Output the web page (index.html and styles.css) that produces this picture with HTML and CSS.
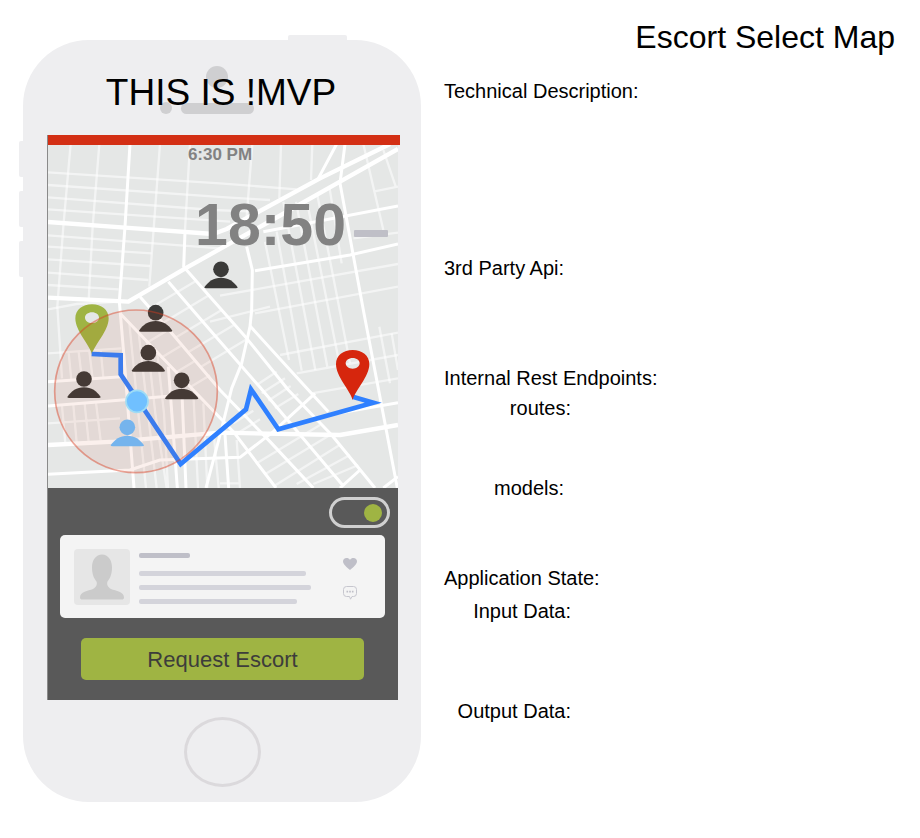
FILE: index.html
```html
<!DOCTYPE html>
<html lang="en">
<head>
<meta charset="utf-8">
<title>Escort Select Map</title>
<link rel="stylesheet" href="styles.css">
</head>
<body>
<main class="page">
  <section class="phone" aria-label="Phone mockup">
    <span class="key key-power"></span>
    <span class="key key-mute"></span>
    <span class="key key-up"></span>
    <span class="key key-down"></span>

    <header class="phone-top">
      <svg class="sensors" viewBox="0 0 94 50" aria-hidden="true">
        <circle cx="57" cy="11" r="11"/>
        <circle cx="6" cy="42" r="6"/>
        <rect x="21" y="37" width="73" height="11" rx="5.5"/>
      </svg>
      <h2 class="phone-title">THIS IS !MVP</h2>
    </header>

    <div class="screen">
      <div class="alert-bar"></div>
      <div class="map">
        <svg class="map-art" viewBox="24 45 1050 1029" role="img" aria-label="Street map with route">
          <defs>
            <g id="person">
              <circle r="23.5"/>
              <path d="M-50 54C-38 36-22 25 0 25S38 36 50 54Q50 57 44 57H-44Q-50 57-50 54Z"/>
            </g>
            <path id="pin" fill-rule="evenodd" d="M0 108C-8 78-50 38-50 0C-50-26-28-42 0-42S50-26 50 0C50 38 8 78 0 108ZM0-18C-12-18-21-11-21-2S-12 14 0 14S21 7 21-2S12-18 0-18Z"/>
          </defs>
          <rect class="land" x="24" y="42" width="1050" height="1032"/>

          <g class="street minor">
            <path d="M92 42L70 290L52 530L66 745M178 42L158 290L146 510M360 42L340 310L328 470M450 42L435 300M637 42L620 260M723 42L718 205M817 42L813 150"/>
            <path d="M24 127L540 160L770 178M24 165L570 203L690 210M24 202L520 240L625 244M24 238L570 275M24 316L540 355M24 350L335 370M24 388L330 408M24 428L325 450M24 465L236 478M24 538L110 522L240 515"/>
            <path d="M24 670L244 655M24 880L240 865M86 668L94 750M116 666L126 748M148 664L158 746M182 660L190 742M66 828L76 940M100 825L110 938M134 822L146 936M168 818L182 932"/>
            <path d="M268 580L290 800L318 1074M296 608L318 800L350 1074M322 640L346 850L380 1074M352 670L372 850L384 1074M460 790L474 1074M490 820L502 1074M522 920L536 1074M590 930L600 1074M540 1060H600"/>
            <path d="M970 42L1030 300M1030 60L1068 172M1000 185L1074 170M940 325L1074 308M540 497L1074 402M645 550L1074 470M720 675L1074 608M770 730L1074 675M815 790L1074 745"/>
            <path d="M675 335L747 690M710 305L785 722M730 215L826 720M768 215L862 710M802 220L898 700M832 195L930 700M868 170L905 400M1018 590L1050 760M1055 610L1074 720"/>
            <path d="M330 535L469 452M368 579L507 496M406 623L545 540M444 667L583 584M482 711L620 628M318 640L378 604M362 684L422 648M406 728L466 692M450 772L510 736M510 575L690 530"/>
            <path d="M650 765L710 725M665 790L735 745M685 812L752 768M705 835L775 792M580 880L640 842M600 905L660 868M650 1000L840 885M676 1032L870 915M706 1066L900 944M770 1062L930 975M820 1062L955 1005"/>
          </g>

          <g class="street major">
            <path d="M270 42L255 290L238 515L252 680L282 1074M435 305L431 413M915 42L900 160L970 540L1072 1074M890 42L835 145"/>
            <path d="M620 350L637 420L635 540L630 590L605 700L575 775L544 900L498 1074M385 710L412 1074M424 745L438 1074M555 915L566 1074"/>
            <path d="M431 410L510 500L620 625L745 780L875 915L1005 1074M630 588L755 725L865 845M385 455L510 600L660 772L910 1068M300 500L400 615L540 780L690 935L820 1074M240 550L460 780L580 905L708 1074"/>
            <path d="M670 305L1074 228M645 422L930 375L1074 342M880 852L1074 818M24 755L245 740M24 828L394 798M24 1033L270 1020L360 990L600 982L700 905L825 790M900 1074L960 1020M1030 1074L1074 1040"/>
          </g>
          <g class="street avenue">
            <path d="M24 276L255 293L520 312L560 297L840 145L1050 42M24 503L265 515L440 413L570 340L670 285L900 155L1074 57M24 945L224 935L540 908L900 915L1074 885"/>
          </g>

          <g class="people">
            <use href="#person" x="543" y="418"/>
            <use href="#person" x="347" y="548"/>
            <use href="#person" x="325" y="668"/>
            <use href="#person" x="132" y="747"/>
            <use href="#person" x="425" y="751"/>
            <use class="me" href="#person" x="262" y="892"/>
          </g>
          <use class="pin-start" href="#pin" x="156" y="565"/>
          <path class="route" d="M155 672L242 676V733L422 1002L618 838L633 778L715 898L1000 818L938 800"/>
          <circle class="range" cx="288" cy="784" r="244"/>
          <use class="pin-end" href="#pin" x="938" y="702"/>
          <circle class="here" cx="291" cy="814" r="33"/>
        </svg>
        <div class="map-overlay">
          <p class="status-time">6:30 PM</p>
          <p class="countdown"><span>18:50</span><span class="unit"></span></p>
        </div>
      </div>

      <div class="panel">
        <input class="toggle" type="checkbox" checked aria-label="Escort available">
        <article class="card">
          <svg class="avatar" viewBox="0 0 56 56" aria-hidden="true">
            <rect width="56" height="56" rx="4" fill="#e6e6e6"/>
            <path fill="#cbcbcb" d="M28 5.500C34 5.500 38 11 38 18.500C38 26 35.500 30 33.500 32.500C32.500 35 33.500 38 37 40C42 42 50 42.500 50 48.500C50 50 49 50.500 48 50.500H8C7 50.500 6 50 6 48.500C6 42.500 14 42 19 40C22.500 38 23.500 35 22.500 32.500C20.500 30 18 26 18 18.500C18 11 22 5.500 28 5.500Z"/>
          </svg>
          <div class="lines">
            <span class="line line-name"></span>
            <span class="line line-a"></span>
            <span class="line line-b"></span>
            <span class="line line-c"></span>
          </div>
          <div class="actions">
            <button class="icon-btn" type="button" aria-label="Like">
              <svg viewBox="0 0 14 14" width="14" height="14"><path fill="#bfbfc8" d="M7 13C4 10.500 0 7.500 0 4.300C0 2.300 1.500 1 3.500 1C5 1 6.300 1.600 7 3C7.700 1.600 9 1 10.500 1C12.500 1 14 2.300 14 4.300C14 7.500 10 10.500 7 13Z"/></svg>
            </button>
            <button class="icon-btn" type="button" aria-label="Message">
              <svg viewBox="0 0 14 14" width="14" height="14"><path fill="none" stroke="#c6c6ce" d="M3.500.5H10.500Q13.500.5 13.500 3.500V7.500Q13.500 10.500 10.500 10.500H9L7.500 13.200L6.500 10.500H3.500Q.5 10.500.5 7.500V3.500Q.5.500 3.500.5Z"/><path fill="#bfbfc8" d="M3.500 4.800h1.600v1.600h-1.600zM6.200 4.800h1.600v1.600h-1.600zM8.900 4.800h1.600v1.600h-1.600z"/></svg>
            </button>
          </div>
        </article>
        <button class="request" type="button">Request Escort</button>
      </div>
    </div>

    <button class="home" type="button" aria-label="Home"></button>
  </section>

  <section class="notes">
    <h1>Escort Select Map</h1>
    <section class="note note-tech"><h2>Technical Description:</h2></section>
    <section class="note note-api"><h2>3rd Party Api:</h2></section>
    <section class="note note-rest">
      <h2>Internal Rest Endpoints:</h2>
      <h3>routes:</h3>
      <h3 class="models">models:</h3>
    </section>
    <section class="note note-state">
      <h2>Application State:</h2>
      <h3>Input Data:</h3>
      <h3>Output Data:</h3>
    </section>
  </section>
</main>
</body>
</html>
```
FILE: styles.css
```css
* {
  box-sizing: border-box;
}

body {
  margin: 0;
  background: #fff;
  color: #000;
  font-family: "Liberation Sans", Arial, sans-serif;
}

h1, h2, h3, p {
  margin: 0;
  font-weight: normal;
}

.page {
  display: grid;
  grid-template-columns: minmax(0, 398fr) minmax(0, 451fr);
  gap: 23px;
  padding: 0 25px 0 23px;
  align-items: start;
}

/* Phone */
.phone {
  position: relative;
  margin: 40px 0 36px;
  padding-bottom: 15px;
  border-radius: 66px;
  background: #eeeef0;
}

.key {
  position: absolute;
  left: -4px;
  width: 4px;
  height: 36px;
  border-radius: 2px 0 0 2px;
  background: #eeeef0;
}

.key-power {
  top: -5px;
  left: auto;
  right: 74px;
  width: 59px;
  height: 6px;
  border-radius: 2px 2px 0 0;
}

.key-mute { top: 101px; }
.key-up { top: 151px; }
.key-down { top: 201px; }

.phone-top {
  display: grid;
  height: 95px;
  justify-items: center;
  align-items: center;
}

.sensors,
.phone-title {
  grid-area: 1 / 1;
}

.sensors {
  width: 94px;
  margin-right: 30px;
  margin-top: 6px;
  fill: #cfcfd1;
}

.phone-title {
  margin-top: 10px;
  margin-right: 2px;
  font-size: 37px;
  line-height: 44px;
}

.screen {
  margin: 0 23px 0 24px;
  border-left: 1px solid #8a8a8a;
}

.alert-bar {
  height: 10px;
  margin-right: -2px;
  background: #d32f14;
}

.map {
  position: relative;
}

.map-art {
  display: block;
  width: 100%;
}

.land { fill: #e5e7e6; }

.street {
  fill: none;
  stroke: #fff;
  stroke-linejoin: round;
}

.minor {
  stroke-width: 7px;
  stroke-opacity: 0.55;
}

.major { stroke-width: 9px; }
.avenue { stroke-width: 13px; }
.people { fill: #3a3a38; }
.me { fill: #6ebeff; }
.pin-start { fill: #9fb443; }
.pin-end { fill: #d6260d; }

.route {
  fill: none;
  stroke: #2f80ff;
  stroke-width: 14px;
}

.range {
  fill: rgba(210, 60, 30, 0.08);
  stroke: rgba(217, 60, 30, 0.45);
  stroke-width: 5px;
}

.here {
  fill: #70c0ff;
  stroke: #9fdcf5;
  stroke-width: 5px;
}

.map-overlay {
  position: absolute;
  inset: 0;
  color: #828282;
}

.status-time,
.countdown {
  font-weight: bold;
}

.status-time {
  padding-right: 6px;
  font-size: 17px;
  line-height: 20px;
  text-align: center;
}

.countdown {
  display: flex;
  justify-content: flex-end;
  align-items: center;
  gap: 8px;
  margin-top: 24px;
  padding-right: 10px;
  font-size: 59px;
  line-height: 72px;
}

.unit {
  width: 34px;
  height: 7px;
  margin-top: 16px;
  border-radius: 1px;
  background: #bfbfc7;
}

.panel {
  display: flex;
  flex-direction: column;
  padding: 9px 13px 20px 12px;
  background: #595959;
}

.toggle {
  appearance: none;
  align-self: flex-end;
  display: flex;
  justify-content: flex-end;
  align-items: center;
  width: 61px;
  height: 31px;
  margin: 0 -5px 7px 0;
  padding-right: 5px;
  border: 3px solid #d0d0d0;
  border-radius: 16px;
}

.toggle::before {
  content: "";
  width: 18px;
  height: 18px;
  border-radius: 50%;
  background: #9fb443;
}

.toggle:not(:checked) {
  justify-content: flex-start;
  padding-left: 5px;
}

.card {
  display: flex;
  align-items: flex-start;
  padding: 14px 28px 13px 14px;
  border-radius: 5px;
  background: #f4f4f4;
}

.avatar {
  flex: none;
  width: 56px;
}

.lines {
  flex: 1;
  display: flex;
  flex-direction: column;
  gap: 9px;
  padding: 4px 0 0 9px;
}

.line {
  height: 5px;
  border-radius: 2px;
  background: #d4d4db;
}

.line-name {
  width: 51px;
  margin-bottom: 4px;
  background: #bfbfc8;
}

.line-a { width: 167px; }
.line-b { width: 172px; }
.line-c { width: 158px; }

.actions {
  display: flex;
  flex-direction: column;
  gap: 15px;
  padding-top: 8px;
}

.icon-btn {
  display: block;
  width: 14px;
  height: 14px;
  padding: 0;
  border: 0;
  background: none;
}

.icon-btn svg {
  display: block;
}

.request {
  height: 42px;
  margin: 20px 21px 0;
  padding: 2px 0 0;
  border: 0;
  border-radius: 5px;
  background: #9fb443;
  color: #3d3d3b;
  font: 22px/40px "Liberation Sans", Arial, sans-serif;
}

.home {
  display: block;
  width: 77px;
  height: 70px;
  margin: 17px auto 0;
  border: 3px solid #dbd9dc;
  border-radius: 50%;
  background: none;
}

/* Notes */
.notes {
  padding-top: 19px;
}

h1 {
  margin-bottom: 24px;
  font-size: 32px;
  line-height: 36px;
  text-align: right;
}

.note h2,
.note h3 {
  font-size: 20px;
  line-height: 24px;
}

.note h3 {
  width: 127px;
  text-align: right;
}

.note-tech { min-height: 177px; }
.note-api { min-height: 110px; }

.note-rest {
  display: grid;
  grid-template-rows: 30px 80px 90px;
}

.note-rest .models { width: 120px; }

.note-state {
  display: grid;
  grid-template-rows: 33px 100px auto;
}
```
